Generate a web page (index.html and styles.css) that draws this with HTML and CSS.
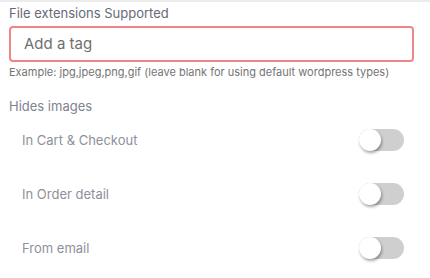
FILE: index.html
```html
<!DOCTYPE html>
<html lang="en">
<head>
    <meta charset="UTF-8">
    <meta name="viewport" content="width=device-width, initial-scale=1.0">
    <title>Image settings</title>
    <link rel="stylesheet" href="styles.css">
</head>
<body>
    <div class="panel">
        <div class="field">
            <label class="field-label">File extensions Supported</label>
            <div class="tag-input">Add a tag</div>
            <p class="hint">Example: jpg,jpeg,png,gif (leave blank for using default wordpress types)</p>
        </div>
        <div class="group">
            <div class="group-title">Hides images</div>
            <div class="option">
                <span>In Cart &amp; Checkout</span>
                <span class="switch"><span class="knob"></span></span>
            </div>
            <div class="option">
                <span>In Order detail</span>
                <span class="switch"><span class="knob"></span></span>
            </div>
            <div class="option">
                <span>From email</span>
                <span class="switch"><span class="knob"></span></span>
            </div>
        </div>
    </div>
</body>
</html>
```

FILE: styles.css
```css
body {
    margin: 0;
    background-color: #fff;
    font-family: Inter, 'Liberation Sans', sans-serif;
}
.panel {
    border-top: 2px solid #ececec;
    padding: 0 16px 0 9px;
}
.field-label {
    display: block;
    font-size: 13px;
    line-height: 16px;
    color: #666a78;
    margin: 3px 0 5px;
}
.tag-input {
    box-sizing: border-box;
    height: 36px;
    border: 2px solid #ef8585;
    border-radius: 4px;
    padding: 0 13px;
    line-height: 32px;
    font-size: 15px;
    color: #707070;
}
.hint {
    font-size: 11px;
    line-height: 13px;
    color: #747474;
    margin: 4px 0 0;
}
.group-title {
    font-size: 13px;
    line-height: 16px;
    color: #7f8290;
    margin-top: 19px;
}
.option {
    display: flex;
    align-items: center;
    justify-content: space-between;
    height: 54px;
    margin-top: -1px;
    padding: 0 10px 0 13px;
    font-size: 13px;
    color: #8e909c;
}
.option + .option {
    margin-top: 0;
}
.switch {
    position: relative;
    width: 45px;
    height: 22px;
    border-radius: 11px;
    background-color: #cfcfcf;
}
.knob {
    position: absolute;
    left: 0;
    top: 0;
    width: 22px;
    height: 22px;
    border-radius: 50%;
    background-color: #fff;
    box-shadow: 1px 2px 3px rgba(0, 0, 0, 0.35);
}
```
